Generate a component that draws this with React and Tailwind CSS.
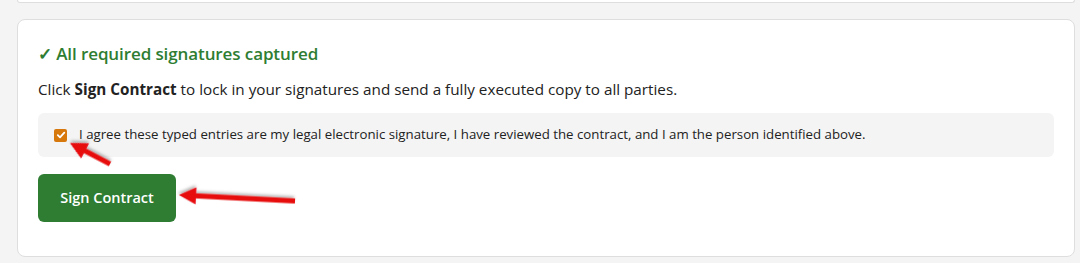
import React from "react";

function Arrow({ x1, y1, x2, y2 }) {
  const dx = x2 - x1;
  const dy = y2 - y1;
  const len = Math.sqrt(dx * dx + dy * dy);
  const ang = (Math.atan2(dy, dx) * 180) / Math.PI;
  const head = 17;
  return (
    <svg
      width="1080"
      height="263"
      viewBox="0 0 1080 263"
      className="absolute left-0 top-0 pointer-events-none overflow-visible"
    >
      <defs>
        <filter id={`sh${x1}`} x="-20%" y="-50%" width="140%" height="200%">
          <feDropShadow dx="1" dy="2" stdDeviation="1.5" floodColor="#000" floodOpacity="0.3" />
        </filter>
      </defs>
      <g transform={`translate(${x1} ${y1}) rotate(${ang})`} filter={`url(#sh${x1})`}>
        <path
          d={`M0 -2.6 L${len - head} -2.6 L${len - head} -8.5 L${len} 0 L${len - head} 8.5 L${len - head} 2.6 L0 2.6 Z`}
          fill="#e8080a"
        />
      </g>
    </svg>
  );
}

export default function App() {
  return (
    <div
      className="relative w-[1080px] h-[263px] overflow-hidden bg-[#f4f4f4] pl-[17px] pr-[5px]"
      style={{ fontFamily: '"Open Sans", "Noto Sans", sans-serif' }}
    >
      <div className="h-[3px] bg-white border-x border-b border-[#dedede] rounded-b-lg"></div>
      <div className="mt-[16px] bg-white border border-[#dedede] rounded-lg h-[238px] px-[20px] pt-[22px] flex flex-col items-start">
        <div className="text-[17px] font-semibold text-[#2e7d32] leading-[24px] tracking-[-0.1px]">
          ✓ All required signatures captured
        </div>
        <div className="mt-[12px] text-[15.25px] text-[#222] leading-[22px]">
          Click <span className="font-bold">Sign Contract</span> to lock in your signatures and send a fully executed copy to all parties.
        </div>
        <div className="mt-[13px] self-stretch h-[44px] bg-[#f4f4f4] rounded-md flex items-center pl-[16px]">
          <span className="w-[13px] h-[13px] rounded-[2px] bg-[#d6780b] flex items-center justify-center shrink-0">
            <svg width="10" height="10" viewBox="0 0 10 10">
              <path d="M1.8 5.2 L4 7.3 L8.3 2.6" fill="none" stroke="#fff" strokeWidth="1.8" strokeLinecap="round" strokeLinejoin="round" />
            </svg>
          </span>
          <span className="ml-[12px] text-[13.25px] text-[#222]">
            I agree these typed entries are my legal electronic signature, I have reviewed the contract, and I am the person identified above.
          </span>
        </div>
        <button className="mt-[17px] w-[138px] h-[48px] bg-[#2e7d32] rounded-md text-white text-[14.5px] font-semibold flex items-center justify-center">
          Sign Contract
        </button>
      </div>
      <Arrow x1={110} y1={164} x2={70} y2={143} />
      <Arrow x1={295} y1={201} x2={179} y2={195} />
    </div>
  );
}
